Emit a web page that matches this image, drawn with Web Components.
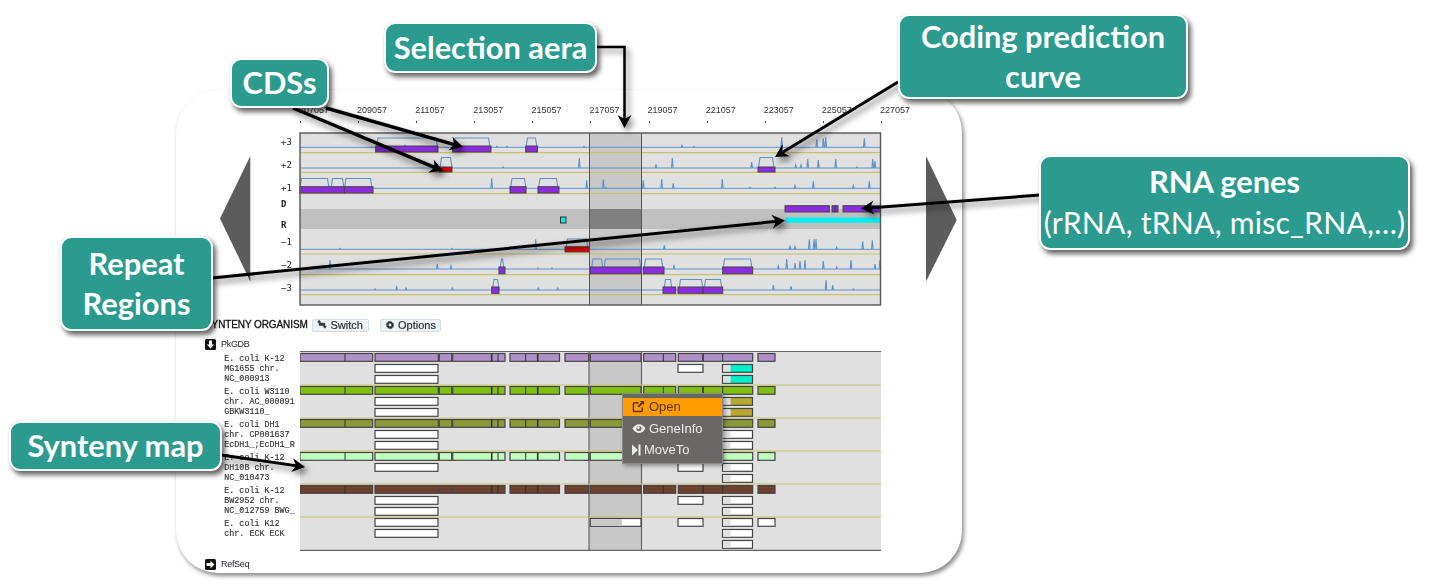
<!DOCTYPE html>
<html>
<head>
<meta charset="utf-8">
<title>Genome browser annotated</title>
<style>
    html, body { margin: 0; background: #fff; overflow: hidden; }
    body { width: 1439px; height: 586px; position: relative; font-family: "Liberation Sans", Arial, sans-serif; }
    .reg { font-weight: 400; font-size: 30.2px; letter-spacing: 0.2px; }
</style>
</head>
<body>
<gb-browser></gb-browser>
<gb-arrows></gb-arrows>
<gb-callout style="left:384px;top:22px;width:213px;height:51px">Selection aera</gb-callout>
<gb-callout style="left:230px;top:58px;width:99px;height:50px">CDSs</gb-callout>
<gb-callout style="left:898px;top:14px;width:290px;height:85px">Coding prediction<br>curve</gb-callout>
<gb-callout style="left:1039px;top:155px;width:371px;height:95px">RNA genes<br><span class="reg">(rRNA, tRNA, misc_RNA,…)</span></gb-callout>
<gb-callout style="left:60px;top:236px;width:153px;height:95px">Repeat<br>Regions</gb-callout>
<gb-callout style="left:9px;top:421px;width:213px;height:50px">Synteny map</gb-callout>

<script>
const SVG_OPEN = (box, w, h) => `<svg xmlns="http://www.w3.org/2000/svg" viewBox="${box}" width="${w}" height="${h}" style="display:block">`;

// Teal labels laid over the screenshot
class GbCallout extends HTMLElement {
    constructor() {
        super();
        this.attachShadow({ mode: "open" }).innerHTML = `
<style>
    :host {
        position: absolute;
        display: flex;
        align-items: center;
        justify-content: center;
        box-sizing: border-box;
        text-align: center;
        background: #2a9b8e;
        border: 2px solid #fff;
        border-radius: 11px;
        box-shadow: 3px 4px 5px rgba(0, 0, 0, 0.6), 0 0 1px #ccc;
        color: #fff;
        font-family: "Lato", sans-serif;
        font-weight: 700;
        font-size: 30.8px;
        line-height: 40px;
        white-space: nowrap;
    }
</style>
<div><slot></slot></div>`;
    }
}

// All arrows, in page coordinates
class GbArrows extends HTMLElement {
    constructor() {
        super();
        const lines = [
            { pts: [[597, 47], [624.5, 47], [624.5, 128]], w: 2.5 },
            { pts: [[326, 108], [463, 147]], w: 3.5 },
            { pts: [[293, 108], [443, 171]], w: 3.5 },
            { pts: [[898, 82], [775, 157]], w: 3 },
            { pts: [[1040, 195], [861, 208.5]], w: 3 },
            { pts: [[212, 278], [785, 220.5]], w: 3 },
            { pts: [[221, 455], [305, 467]], w: 3 }
        ];
        let body = "";
        lines.forEach(line => {
            const pts = line.pts;
            const tip = pts[pts.length - 1];
            const prev = pts[pts.length - 2];
            const len = Math.hypot(tip[0] - prev[0], tip[1] - prev[1]);
            const ux = (tip[0] - prev[0]) / len, uy = (tip[1] - prev[1]) / len;
            const at = (back, side) => `${tip[0] - ux * back - uy * side},${tip[1] - uy * back + ux * side}`;
            const stem = pts.slice(0, -1).map(p => p.join(",")).join(" ") + " " + at(8, 0);
            body += `<polyline points="${stem}" fill="none" stroke="#000" stroke-width="${line.w}"/>`;
            body += `<polygon points="${at(0, 0)} ${at(13, 7)} ${at(9, 0)} ${at(13, -7)}" fill="#000"/>`;
        });
        this.attachShadow({ mode: "open" }).innerHTML = `
<style>
    :host { position: absolute; left: 0; top: 0; display: block; pointer-events: none; }
    svg { filter: drop-shadow(3px 4px 3px rgba(0, 0, 0, 0.55)); }
</style>
${SVG_OPEN("0 0 1439 586", 1439, 586)}${body}</svg>`;
    }
}

// Big grey triangle either side of the browser
class GbNav extends HTMLElement {
    constructor() {
        super();
        const left = this.getAttribute("dir") === "left";
        const pts = left ? "30.3,0 0,62.5 30.3,125.5" : "0,0 30.7,64 0,125.5";
        this.attachShadow({ mode: "open" }).innerHTML = `
<style>
    :host { display: block; flex: none; width: 31px; height: 126px; margin-top: 66px; }
</style>
${SVG_OPEN("0 0 31 126", 31, 126)}<polygon points="${pts}" fill="#5c5c5c"/></svg>`;
    }
}

// Position ruler on top of the tracks
class GbRuler extends HTMLElement {
    constructor() {
        super();
        let cells = "";
        for (let i = 0; i < 11; i++) {
            cells += `<div class="cell"><span>${207057 + i * 2000}</span><i></i></div>`;
        }
        this.attachShadow({ mode: "open" }).innerHTML = `
<style>
    :host {
        display: grid;
        grid-template-columns: repeat(10, 58.1px) 20px;
        height: 42px;
        margin-left: 50px;
        font: 9px/10px "Liberation Sans", sans-serif;
        color: #333;
    }
    .cell { padding-top: 15px; white-space: nowrap; }
    span { display: block; height: 16px; margin-left: -1px; }
    i { display: block; width: 1px; height: 2px; background: #444; }
</style>
${cells}`;
    }
}

// Six frames plus the direct and reverse lanes
class GbTracks extends HTMLElement {
    constructor() {
        super();
        const lanes = [
            { base: 147.3, gold: 152.7, top: 138,
              humps: [[376.5, 437.5], [453, 490], [526, 537]],
              spikes: [[781.7, 10], [816.7, 8], [823.3, 9], [825.7, 10], [864.3, 9], [584, 1], [682, 2], [694, 1], [507, 1], [497, 1], [405, 2]],
              bars: [[375.7, 438, "p"], [452.7, 491, "p"], [525.7, 537.5, "p"]], y: 146, h: 6 },
            { base: 168, gold: 172.3, top: 157.5,
              humps: [[440, 452], [758.5, 774]],
              spikes: [[579.3, 10], [656, 3], [672.3, 10], [751.7, 6], [795.7, 3], [801, 3], [807.7, 9], [818.3, 8], [835.7, 9], [857, 1], [872.7, 9], [875, 7], [503, 1]],
              bars: [[439, 452, "r"], [758, 775, "p"]], y: 167, h: 5 },
            { base: 188.3, gold: 193.7, top: 178.5,
              humps: [[300, 329], [331, 344], [344.5, 372], [510.5, 526], [538.5, 558]],
              spikes: [[491.7, 10], [586.7, 8], [603.3, 9], [643.3, 8], [661.7, 9], [673.3, 5], [722.3, 9], [795, 3], [813.3, 7], [853.3, 3], [869.3, 7], [606, 1], [750, 1], [775, 1]],
              bars: [[300, 344.3, "p"], [344.3, 373, "p"], [510, 526, "p"], [538, 559, "p"]], y: 186.7, h: 6.3 },
            { base: 249.3, gold: 254, top: 239,
              humps: [[566, 588]],
              spikes: [[340, 1], [535.7, 10], [452, 1], [664.3, 4], [790, 3], [795, 3], [809.3, 10], [814, 10], [816, 10], [836.7, 2], [862.7, 8], [872.3, 9]],
              bars: [[565, 589.3, "r"]], y: 246.7, h: 5.3 },
            { base: 269, gold: 274.7, top: 259,
              humps: [[591.5, 603], [604, 641], [644, 663], [723, 752], [500, 504]],
              spikes: [[330, 9], [437.3, 5], [451, 3], [538, 1], [552, 1], [674, 4], [778.3, 3], [786.7, 10], [795, 6], [800, 8], [805, 9], [823.3, 8], [836.7, 2], [851, 9], [875, 5], [880, 9]],
              bars: [[499, 505, "p"], [590, 641, "p"], [643.3, 664, "p"], [722.7, 752.7, "p"]], y: 267, h: 6.8 },
            { base: 290, gold: 294.7, top: 279.5,
              humps: [[492.5, 499], [664, 672], [679, 703], [704, 722]],
              spikes: [[375, 1], [396.7, 3], [406, 2], [452.3, 2], [538.3, 2], [557.7, 2], [773.3, 5], [791, 4], [826, 10], [832.7, 5], [853.3, 1]],
              bars: [[491.7, 499, "p"], [663, 675.7, "p"], [678, 703, "p"], [703, 722.7, "p"]], y: 287, h: 6.3 }
        ];
        const fills = { p: "#8b2be2", r: "#e00000" };
        const X0 = 300, X1 = 880.5;

        let back = `<rect x="${X0}" y="133" width="${X1 - X0}" height="172" fill="#e0e0e0"/>`;
        back += `<rect x="${X0}" y="209" width="${X1 - X0}" height="20" fill="#c0c0c0"/>`;
        back += `<rect x="589.5" y="133" width="52" height="172" fill="#c8c8c8"/>`;
        back += `<rect x="589.5" y="209" width="52" height="20" fill="#808080"/>`;

        let lineMarks = "", barMarks = "";
        lanes.forEach(lane => {
            lineMarks += `<line x1="${X0}" x2="${X1}" y1="${lane.gold}" y2="${lane.gold}" stroke="#c9c26c" stroke-width="1.2"/>`;
            lineMarks += `<line x1="${X0}" x2="${X1}" y1="${lane.base}" y2="${lane.base}" stroke="#5f92c4" stroke-width="1"/>`;
            let d = "";
            lane.humps.forEach(h => {
                d += `M${h[0]} ${lane.base}L${h[0] + 1.5} ${lane.top}L${h[1] - 1.5} ${lane.top}L${h[1]} ${lane.base}`;
            });
            lane.spikes.forEach(s => {
                d += `M${s[0] - 0.8} ${lane.base}L${s[0]} ${lane.base - s[1]}L${s[0] + 0.8} ${lane.base}`;
            });
            lineMarks += `<path d="${d}" fill="none" stroke="#5f92c4" stroke-width="1.1"/>`;
            lane.bars.forEach(b => {
                barMarks += `<rect x="${b[0]}" y="${lane.y}" width="${b[1] - b[0]}" height="${lane.h}" fill="${fills[b[2]]}" stroke="#444" stroke-width="1"/>`;
            });
        });

        // direct and reverse lanes
        barMarks += `<rect x="785" y="205.7" width="44.3" height="6.3" fill="#8b2be2" stroke="#444"/>`;
        barMarks += `<rect x="832" y="205.7" width="3" height="6.3" fill="#8b2be2" stroke="#444"/>`;
        barMarks += `<rect x="835.3" y="205.7" width="2.7" height="6.3" fill="#8b2be2" stroke="#444"/>`;
        barMarks += `<rect x="843" y="205.7" width="37.5" height="6.3" fill="#8b2be2" stroke="#444"/>`;
        barMarks += `<rect x="785" y="217.5" width="95.5" height="5.2" fill="#00f0f0"/>`;
        barMarks += `<rect x="560.5" y="217" width="5.5" height="6" fill="#00e8e8" stroke="#333"/>`;

        const labels = [["+3", 142], ["+2", 164.5], ["+1", 187.5], ["D", 203.5, 1], ["R", 225, 1], ["−1", 242], ["−2", 264.5], ["−3", 287.5]];
        const names = labels.map(l => `<text x="281" y="${l[1] + 3}" font-size="9" font-weight="${l[2] ? 700 : 400}" font-family="'DejaVu Sans Mono','Liberation Mono',monospace" fill="#222">${l[0]}</text>`).join("");

        const frame = `<rect x="${X0}" y="133" width="${X1 - X0}" height="172" fill="none" stroke="#555" stroke-width="1.4"/>
            <line x1="589.5" x2="589.5" y1="133" y2="305" stroke="#555"/><line x1="641.5" x2="641.5" y1="133" y2="305" stroke="#555"/>`;

        this.attachShadow({ mode: "open" }).innerHTML = `
<style>
    :host { display: block; width: 632px; height: 175px; }
</style>
${SVG_OPEN("250 132 632 175", 632, 175)}${back}${lineMarks}${names}${barMarks}${frame}</svg>`;
    }
}

// Right click menu over the synteny map
class GbMenu extends HTMLElement {
    constructor() {
        super();
        this.attachShadow({ mode: "open" }).innerHTML = `
<style>
    :host {
        position: absolute;
        display: block;
        box-sizing: border-box;
        width: 101px;
        height: 71px;
        padding-top: 4px;
        background: #6b6767;
        border: 1px solid #8a8a8a;
        box-shadow: 2px 2px 4px rgba(0, 0, 0, 0.35);
        font: 13px/18px "Liberation Sans", sans-serif;
        color: #ececec;
    }
    div { display: flex; align-items: center; height: 18px; padding-left: 9px; gap: 3px; margin-bottom: 3px; }
    div.on { background: #ff9c00; color: #5b3208; margin-bottom: 4px; gap: 4px; }
    svg { display: block; flex: none; }
</style>
<div class="on"><svg viewBox="0 0 14 14" width="13" height="13"><path d="M11 8v3.5a1 1 0 0 1-1 1H2.5a1 1 0 0 1-1-1V4a1 1 0 0 1 1-1H7" fill="none" stroke="#5b3208" stroke-width="1.6"/><path d="M8.5 1H13v4.5L11.4 4 7.5 8 6 6.5 10 2.6z" fill="#5b3208"/></svg>Open</div>
<div><svg viewBox="0 0 16 12" width="14" height="11"><path d="M0.5 6C3 2 5.500 1 8 1s5 1 7.5 5c-2.500 4-5 5-7.500 5S3 10 0.5 6z" fill="#ececec"/><circle cx="8" cy="6" r="2.900" fill="#6b6767"/><circle cx="7.300" cy="5" r="1.500" fill="#ececec"/></svg><span>GeneInfo</span></div>
<div><svg viewBox="0 0 9 12" width="9" height="12"><path d="M0 0.5L6 6 0 11.5z M6.5 0.5H8.5V11.5H6.5z" fill="#ececec"/></svg><span>MoveTo</span></div>`;
    }
}

// Collapsible heading with the small black square arrow
class GbGroup extends HTMLElement {
    constructor() {
        super();
        const down = "M4 1.5h3v4h2.2L5.5 9.5 1.8 5.5H4z";
        const right = "M1.5 4h4V1.8l4 3.7-4 3.7V7h-4z";
        const d = this.getAttribute("dir") === "down" ? down : right;
        this.attachShadow({ mode: "open" }).innerHTML = `
<style>
    :host { display: flex; align-items: center; gap: 5px; height: 11px; font: 9px/11px "Liberation Sans", sans-serif; color: #223; letter-spacing: -0.3px; }
    svg { display: block; flex: none; }
</style>
<svg viewBox="0 0 11 11" width="11" height="11"><rect width="11" height="11" rx="1.5" fill="#111"/><path d="${d}" fill="#fff"/></svg><slot></slot>`;
    }
}

// Small pale toolbar button
class GbButton extends HTMLElement {
    constructor() {
        super();
        const icons = {
            switch: `<path d="M3 3.5v5h7M3 1.5L1 4h4zM11 10.500v-5H4M11 12.500L13 10H9z" transform="translate(0 -1)" fill="#333" stroke="#333" stroke-width="1"/>`,
            options: `<path d="M7 1l1 1.6 1.8-.5.5 1.8 1.8.5-.5 1.8L13 7l-1.4 1.3.5 1.8-1.8.5-.5 1.8-1.8-.5L7 13l-1-1.6-1.8.5-.5-1.8-1.8-.5.5-1.8L1 7l1.4-1.3-.5-1.8 1.8-.5.5-1.8L6 2.1z" fill="#333"/><circle cx="7" cy="7" r="2" fill="#eef3f8"/>`
        };
        this.attachShadow({ mode: "open" }).innerHTML = `
<style>
    :host {
        display: flex;
        align-items: center;
        justify-content: center;
        gap: 3px;
        box-sizing: border-box;
        height: 13px;
        background: #eef3f8;
        border: 1px solid #d3dbe3;
        border-radius: 2px;
        font: 11px/12px "Liberation Sans", sans-serif;
        color: #333;
    }
    svg { display: block; flex: none; }
</style>
<svg viewBox="0 0 14 14" width="10" height="10">${icons[this.getAttribute("icon")]}</svg><slot></slot>`;
    }
}

// Lower block: one row per organism
class GbSynteny extends HTMLElement {
    constructor() {
        super();
        const orgs = [
            { name: ["E. coli K-12", "MG1655 chr.", "NC_000913"], color: "#b090c8",
              boxes: [[1, 375, 438], [2, 375, 438], [1, 678, 703], [1, 722.5, 752.5, "#00f0c8"], [2, 722.5, 752.5, "#00f0c8"]] },
            { name: ["E. coli W3110", "chr. AC_000091", "GBKW3110_"], color: "#80c010",
              boxes: [[1, 375, 438], [2, 375, 438], [1, 722.5, 752.5, "#b8a830"], [2, 722.5, 752.5, "#b8a830"]] },
            { name: ["E. coli DH1", "chr. CP001637", "EcDH1_;EcDH1_R"], color: "#88983a",
              boxes: [[1, 375, 438], [2, 375, 438], [1, 722.5, 752.5, "#fff"], [2, 722.5, 752.5, "#fff"]] },
            { name: ["E. coli K-12", "DH10B chr.", "NC_010473"], color: "#c0ffc0",
              boxes: [[1, 375, 438], [1, 678, 703], [1, 722.5, 752.5, "#fff"], [2, 722.5, 752.5, "#fff"]] },
            { name: ["E. coli K-12", "BW2952 chr.", "NC_012759 BWG_"], color: "#704030",
              boxes: [[1, 375, 438], [2, 375, 438], [1, 678, 703], [1, 722.5, 752.5, "#fff"], [2, 722.5, 752.5, "#fff"]] },
            { name: ["E. coli K12", "chr. ECK ECK"], color: null,
              boxes: [[0, 375, 438], [1, 375, 438], [0, 678, 703], [0, 722.5, 752.5, "#fff"], [1, 722.5, 752.5, "#fff"], [2, 722.5, 752.5, "#fff"], [0, 758, 775]] }
        ];
        const segs = [[300, 372.7], [375, 438.3], [439.3, 451.7], [452.7, 505], [510, 559.5], [565, 588.7], [590.3, 641], [643.7, 675.7], [678.3, 752.7], [758, 775]];
        const ticks = [[345, 1], [491.7, 1.6], [498, 1], [525.7, 1], [537.7, 1.6], [663.3, 1], [703, 1.6], [722.7, 1]];
        const TOP = 353.5, ROW = 33, LANE = 11;

        let marks = `<rect x="300" y="352" width="581" height="198" fill="#e0e0e0"/>`;
        marks += `<rect x="589" y="352" width="52.5" height="198" fill="#c8c8c8"/>`;
        marks += `<path d="M589 352V550M641.5 352V550" stroke="#666" stroke-width="1.2"/>`;
        let rows = "";

        orgs.forEach((org, r) => {
            const y = TOP + r * ROW;
            rows += `<div class="org">${org.name.map(n => `<div>${n}</div>`).join("")}</div>`;
            if (r > 0) {
                marks += `<line x1="300" x2="881" y1="${y - 1.5}" y2="${y - 1.5}" stroke="#c9c26c" stroke-width="1.2"/>`;
            }
            if (org.color) {
                segs.forEach(s => {
                    marks += `<rect x="${s[0]}" y="${y}" width="${s[1] - s[0]}" height="7.8" fill="${org.color}" stroke="#444" stroke-width="1.2"/>`;
                });
                ticks.forEach(t => {
                    marks += `<line x1="${t[0]}" x2="${t[0]}" y1="${y}" y2="${y + 7.8}" stroke="#333" stroke-width="${t[1]}"/>`;
                });
            }
            org.boxes.forEach(b => {
                const by = y + b[0] * LANE;
                if (b[3]) {
                    // the first part of these hits is not aligned
                    marks += `<rect x="${b[1]}" y="${by}" width="${b[2] - b[1]}" height="7.8" fill="${b[3]}" stroke="#444" stroke-width="1.2"/>`;
                    marks += `<rect x="${b[1] + 0.6}" y="${by + 0.6}" width="7.5" height="6.6" fill="#e0e0e0"/>`;
                } else {
                    marks += `<rect x="${b[1]}" y="${by}" width="${b[2] - b[1]}" height="7.8" fill="#fff" stroke="#444" stroke-width="1.2"/>`;
                }
            });
        });

        // selected region partly covered hit on the last row
        const last = TOP + 5 * ROW;
        marks += `<rect x="590.3" y="${last}" width="50.7" height="7.8" fill="#fff" stroke="#444" stroke-width="1.2"/>`;
        marks += `<rect x="590.9" y="${last + 0.6}" width="31" height="6.6" fill="#c8c8c8"/>`;
        marks += `<path d="M300 351.5H881M300 550.3H881" stroke="#666" stroke-width="1.2"/>`;

        this.attachShadow({ mode: "open" }).innerHTML = `
<style>
    :host { display: block; position: relative; margin-left: 29px; padding-top: 11px; }
    .head { display: flex; align-items: center; height: 14px; font: 10px/14px "Liberation Sans", sans-serif; letter-spacing: -0.1px; color: #111; -webkit-text-stroke: 0.3px #111; white-space: nowrap; }
    .head gb-button { -webkit-text-stroke: 0.2px #333; letter-spacing: 0; }
    .head span { width: 106.7px; flex: none; }
    .head gb-button:nth-of-type(1) { width: 57px; }
    .head gb-button:nth-of-type(2) { width: 61px; margin-left: 11.3px; }
    gb-group { margin-top: 7px; }
    .map { display: flex; margin-top: 1px; position: relative; }
    .names { box-sizing: border-box; width: 95px; flex: none; padding: 2.5px 0 0 19.3px; font: 8.4px/10px "Liberation Mono", monospace; color: #333; -webkit-text-stroke: 0.15px #333; white-space: nowrap; }
    .org { height: 33px; }
    gb-group.foot { margin-top: 7.5px; }
    .map gb-menu { left: 417px; top: 41.5px; }
</style>
<div class="head"><span>SYNTENY ORGANISM</span><gb-button icon="switch">Switch</gb-button><gb-button icon="options">Options</gb-button></div>
<gb-group dir="down">PkGDB</gb-group>
<div class="map">
    <div class="names">${rows}</div>
    ${SVG_OPEN("300 351 582 200", 582, 200)}${marks}</svg>
    <gb-menu></gb-menu>
</div>
<gb-group class="foot" dir="right">RefSeq</gb-group>`;
    }
}

// The white rounded screenshot
class GbBrowser extends HTMLElement {
    constructor() {
        super();
        this.attachShadow({ mode: "open" }).innerHTML = `
<style>
    :host {
        display: block;
        box-sizing: border-box;
        width: 786px;
        height: 483px;
        margin: 90px 0 0 176px;
        background: #fff;
        border-radius: 42px;
        box-shadow: 2px 3px 4px rgba(0, 0, 0, 0.45), 0 0 1px rgba(0, 0, 0, 0.08);
        position: absolute;
        left: 0;
        top: 0;
    }
    .inner { filter: blur(0.4px); }
    .top { display: flex; padding-left: 44px; }
    .col { flex: none; width: 632px; margin-left: -1px; }
    gb-nav[dir="right"] { margin-left: 44px; }
</style>
<div class="inner">
    <div class="top">
        <gb-nav dir="left"></gb-nav>
        <div class="col"><gb-ruler></gb-ruler><gb-tracks></gb-tracks></div>
        <gb-nav dir="right"></gb-nav>
    </div>
    <gb-synteny></gb-synteny>
</div>`;
    }
}

customElements.define("gb-callout", GbCallout);
customElements.define("gb-arrows", GbArrows);
customElements.define("gb-nav", GbNav);
customElements.define("gb-ruler", GbRuler);
customElements.define("gb-tracks", GbTracks);
customElements.define("gb-menu", GbMenu);
customElements.define("gb-group", GbGroup);
customElements.define("gb-button", GbButton);
customElements.define("gb-synteny", GbSynteny);
customElements.define("gb-browser", GbBrowser);
</script>
</body>
</html>
